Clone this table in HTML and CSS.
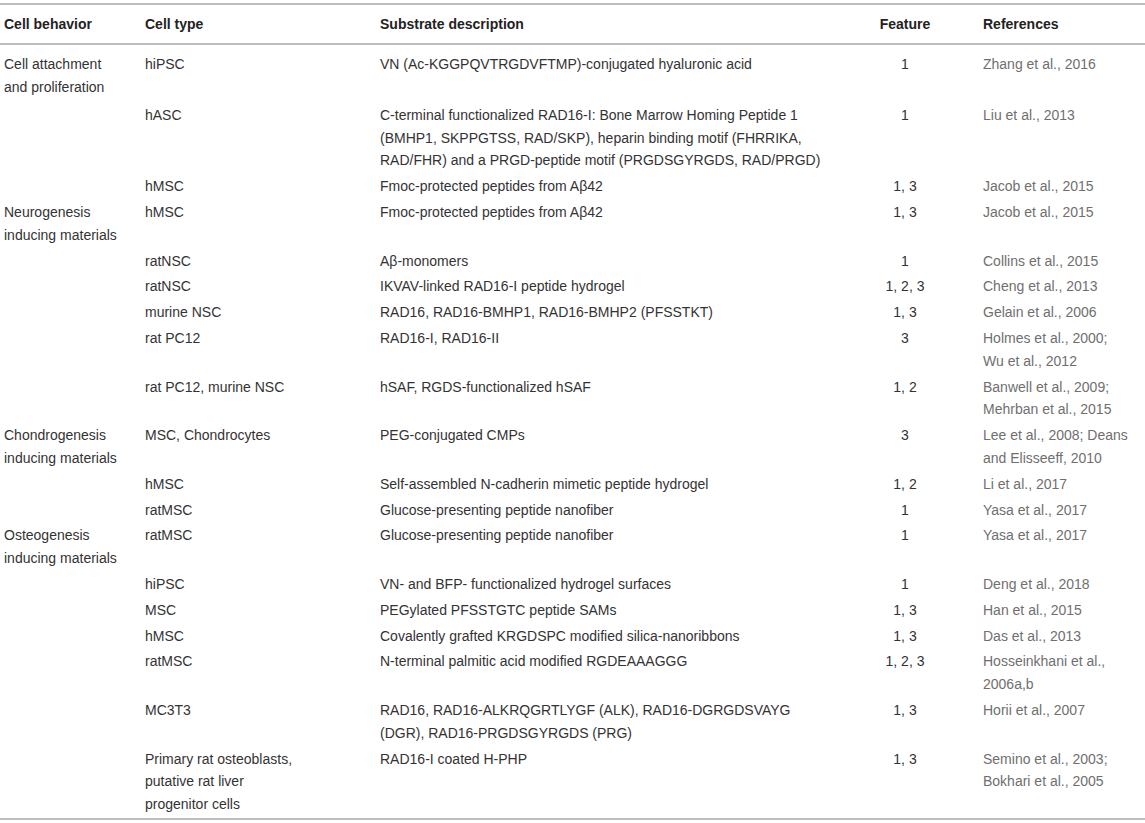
FILE: index.html
```html
<!DOCTYPE html>
<html lang="en">

<head>
    <meta charset="UTF-8">
    <meta name="viewport" content="width=device-width, initial-scale=1.0">
    <title>Peptide substrates and cell behavior</title>
    <link rel="stylesheet" href="styles.css">
</head>

<body>
    <div class="wrap">
        <table class="data">
            <colgroup>
                <col class="c-behavior">
                <col class="c-type">
                <col class="c-desc">
                <col class="c-feature">
                <col class="c-ref">
            </colgroup>
            <thead>
                <tr>
                    <th>Cell behavior</th>
                    <th>Cell type</th>
                    <th>Substrate description</th>
                    <th class="feature">Feature</th>
                    <th class="ref">References</th>
                </tr>
            </thead>
            <tbody>
                <tr>
                    <td class="behavior">Cell attachment and proliferation</td>
                    <td class="type">hiPSC</td>
                    <td class="desc">VN (Ac-KGGPQVTRGDVFTMP)-conjugated hyaluronic acid</td>
                    <td class="feature">1</td>
                    <td class="ref">Zhang et al., 2016</td>
                </tr>
                <tr class="spaced">
                    <td class="behavior"></td>
                    <td class="type">hASC</td>
                    <td class="desc">C-terminal functionalized RAD16-I: Bone Marrow Homing Peptide 1 (BMHP1, SKPPGTSS, RAD/SKP), heparin binding motif (FHRRIKA, RAD/FHR) and a PRGD-peptide motif (PRGDSGYRGDS, RAD/PRGD)</td>
                    <td class="feature">1</td>
                    <td class="ref">Liu et al., 2013</td>
                </tr>
                <tr>
                    <td class="behavior"></td>
                    <td class="type">hMSC</td>
                    <td class="desc">Fmoc-protected peptides from Aβ42</td>
                    <td class="feature">1, 3</td>
                    <td class="ref">Jacob et al., 2015</td>
                </tr>
                <tr>
                    <td class="behavior">Neurogenesis inducing materials</td>
                    <td class="type">hMSC</td>
                    <td class="desc">Fmoc-protected peptides from Aβ42</td>
                    <td class="feature">1, 3</td>
                    <td class="ref">Jacob et al., 2015</td>
                </tr>
                <tr>
                    <td class="behavior"></td>
                    <td class="type">ratNSC</td>
                    <td class="desc">Aβ-monomers</td>
                    <td class="feature">1</td>
                    <td class="ref">Collins et al., 2015</td>
                </tr>
                <tr>
                    <td class="behavior"></td>
                    <td class="type">ratNSC</td>
                    <td class="desc">IKVAV-linked RAD16-I peptide hydrogel</td>
                    <td class="feature">1, 2, 3</td>
                    <td class="ref">Cheng et al., 2013</td>
                </tr>
                <tr>
                    <td class="behavior"></td>
                    <td class="type">murine NSC</td>
                    <td class="desc">RAD16, RAD16-BMHP1, RAD16-BMHP2 (PFSSTKT)</td>
                    <td class="feature">1, 3</td>
                    <td class="ref">Gelain et al., 2006</td>
                </tr>
                <tr>
                    <td class="behavior"></td>
                    <td class="type">rat PC12</td>
                    <td class="desc">RAD16-I, RAD16-II</td>
                    <td class="feature">3</td>
                    <td class="ref">Holmes et al., 2000; Wu et al., 2012</td>
                </tr>
                <tr>
                    <td class="behavior"></td>
                    <td class="type">rat PC12, murine NSC</td>
                    <td class="desc">hSAF, RGDS-functionalized hSAF</td>
                    <td class="feature">1, 2</td>
                    <td class="ref">Banwell et al., 2009; Mehrban et al., 2015</td>
                </tr>
                <tr>
                    <td class="behavior">Chondrogenesis inducing materials</td>
                    <td class="type">MSC, Chondrocytes</td>
                    <td class="desc">PEG-conjugated CMPs</td>
                    <td class="feature">3</td>
                    <td class="ref">Lee et al., 2008; Deans and Elisseeff, 2010</td>
                </tr>
                <tr>
                    <td class="behavior"></td>
                    <td class="type">hMSC</td>
                    <td class="desc">Self-assembled N-cadherin mimetic peptide hydrogel</td>
                    <td class="feature">1, 2</td>
                    <td class="ref">Li et al., 2017</td>
                </tr>
                <tr>
                    <td class="behavior"></td>
                    <td class="type">ratMSC</td>
                    <td class="desc">Glucose-presenting peptide nanofiber</td>
                    <td class="feature">1</td>
                    <td class="ref">Yasa et al., 2017</td>
                </tr>
                <tr>
                    <td class="behavior">Osteogenesis inducing materials</td>
                    <td class="type">ratMSC</td>
                    <td class="desc">Glucose-presenting peptide nanofiber</td>
                    <td class="feature">1</td>
                    <td class="ref">Yasa et al., 2017</td>
                </tr>
                <tr>
                    <td class="behavior"></td>
                    <td class="type">hiPSC</td>
                    <td class="desc">VN- and BFP- functionalized hydrogel surfaces</td>
                    <td class="feature">1</td>
                    <td class="ref">Deng et al., 2018</td>
                </tr>
                <tr>
                    <td class="behavior"></td>
                    <td class="type">MSC</td>
                    <td class="desc">PEGylated PFSSTGTC peptide SAMs</td>
                    <td class="feature">1, 3</td>
                    <td class="ref">Han et al., 2015</td>
                </tr>
                <tr>
                    <td class="behavior"></td>
                    <td class="type">hMSC</td>
                    <td class="desc">Covalently grafted KRGDSPC modified silica-nanoribbons</td>
                    <td class="feature">1, 3</td>
                    <td class="ref">Das et al., 2013</td>
                </tr>
                <tr>
                    <td class="behavior"></td>
                    <td class="type">ratMSC</td>
                    <td class="desc">N-terminal palmitic acid modified RGDEAAAGGG</td>
                    <td class="feature">1, 2, 3</td>
                    <td class="ref">Hosseinkhani et al., 2006a,b</td>
                </tr>
                <tr>
                    <td class="behavior"></td>
                    <td class="type">MC3T3</td>
                    <td class="desc">RAD16, RAD16-ALKRQGRTLYGF (ALK), RAD16-DGRGDSVAYG (DGR), RAD16-PRGDSGYRGDS (PRG)</td>
                    <td class="feature">1, 3</td>
                    <td class="ref">Horii et al., 2007</td>
                </tr>
                <tr>
                    <td class="behavior"></td>
                    <td class="type">Primary rat osteoblasts, putative rat liver progenitor cells</td>
                    <td class="desc">RAD16-I coated H-PHP</td>
                    <td class="feature">1, 3</td>
                    <td class="ref">Semino et al., 2003; Bokhari et al., 2005</td>
                </tr>
            </tbody>
        </table>
    </div>
</body>

</html>
```

FILE: styles.css
```css
body {
    font-family: "Liberation Sans", Arial, sans-serif;
    background-color: #fff;
    color: #333;
    margin: 0;
    padding: 0;
}

.wrap {
    padding-top: 3px;
}

.data {
    width: 1145px;
    border-collapse: collapse;
    table-layout: fixed;
    font-size: 14px;
    line-height: 22.8px;
}

.c-behavior {
    width: 141px;
}

.c-type {
    width: 235px;
}

.c-desc {
    width: 455px;
}

.c-feature {
    width: 148px;
}

.c-ref {
    width: 166px;
}

.data thead tr {
    border-top: 2px solid #bdbdbd;
    border-bottom: 2px solid #bdbdbd;
}

.data th {
    text-align: left;
    font-weight: bold;
    color: #222;
    padding: 8px 4px 7px 4px;
}

.data td {
    vertical-align: top;
    padding: 1.5px 4px;
}

.data tbody tr:first-child td {
    padding-top: 8px;
}

.data tbody tr.spaced td {
    padding-top: 4px;
}

.data tbody tr:last-child {
    border-bottom: 2px solid #bdbdbd;
}

.data tbody tr:last-child td {
    padding-bottom: 2px;
}

.data td.behavior {
    padding-right: 19px;
}

.data td.type {
    padding-right: 76px;
}

.data td.desc {
    padding-right: 4px;
}

.data .feature {
    text-align: center;
}

.data th.ref,
.data td.ref {
    padding-right: 15px;
}

.data td.ref {
    color: #6f6f6f;
}
```
